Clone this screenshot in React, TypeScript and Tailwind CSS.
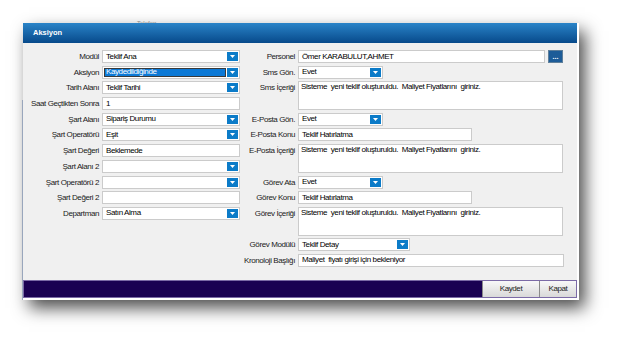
import type { ReactNode } from 'react';

function DropBtn() {
  return (
    <span className="my-[1px] mr-[1px] flex w-[11px] shrink-0 items-center justify-center bg-[#0b7bc8]">
      <svg width="5" height="3" viewBox="0 0 5 3" aria-hidden>
        <path d="M0 0h5L2.5 3z" fill="#fff" />
      </svg>
    </span>
  );
}

function Select({ value, w, active }: { value: string; w: string; active?: boolean }) {
  return (
    <div className={`flex h-[13px] shrink-0 border border-[#cbcbcb] bg-white ${w}`}>
      {active ? (
        <span className="m-[1px] flex flex-1 items-center border border-[#3a3a3a] bg-[#0c79d6] pl-[1px] text-white">
          {value}
        </span>
      ) : (
        <span className="flex flex-1 items-center pl-[3px] text-black">{value}</span>
      )}
      <DropBtn />
    </div>
  );
}

function Input({ value, w }: { value?: string; w: string }) {
  return (
    <div className={`flex h-[13px] shrink-0 items-center border border-[#cbcbcb] bg-white pl-[3px] text-black ${w}`}>
      {value}
    </div>
  );
}

function Area({ value }: { value: string }) {
  return (
    <div className="h-[29px] w-[265px] shrink-0 border border-[#cbcbcb] bg-white pl-[2px] leading-[10px] text-black">
      {value}
    </div>
  );
}

function Row({ label, labelW, children, top }: { label: string; labelW: string; children: ReactNode; top?: boolean }) {
  return (
    <div className={`flex gap-[3px] ${top ? 'items-start' : 'items-center'}`}>
      <span className={`shrink-0 text-right leading-[13px] text-[#1a1a1a] ${labelW}`}>{label}</span>
      {children}
    </div>
  );
}

const MSG = 'Sisteme  yeni teklif oluşturuldu.  Maliyet Fiyatlarını  giriniz.';

export default function App() {
  const lw = 'w-[76px]';
  const rw = 'w-[54px]';
  return (
    <div className="relative h-[343px] w-[622px] overflow-hidden bg-white font-['Liberation_Sans',Arial,sans-serif] text-[8px] tracking-[-0.4px] whitespace-pre">
      {/* window behind the dialog */}
      <span className="absolute left-[137px] top-[19px] text-[6px] tracking-normal text-[#999]">Telefon</span>
      <span className="absolute left-[576px] top-[102px] h-[36px] w-[3px] bg-[#3d6ec0]" />
      <span className="absolute left-[22px] top-[100px] h-[200px] w-[1px] bg-[#b5c5de]" />

      <div className="pl-[23px] pt-[23px]">
        <div className="relative w-[556px] border-b-2 border-r-2 border-white bg-white shadow-[6px_8px_16px_rgba(0,0,0,0.7)]">
          <div className="flex h-[20px] items-center bg-gradient-to-b from-[#2a84c8] to-[#074a8b] pl-[10px] text-[7.5px] font-bold tracking-normal text-white">
            Aksiyon
          </div>
          <div className="flex h-[237px] bg-[#f0f0f0] pt-[7px]">
            <div className="flex w-[218px] flex-col gap-[2.7px]">
              <Row label="Modül" labelW={lw}><Select value="Teklif Ana" w="w-[138px]" /></Row>
              <Row label="Aksiyon" labelW={lw}><Select value="Kaydedildiğinde" w="w-[138px]" active /></Row>
              <Row label="Tarih Alanı" labelW={lw}><Select value="Teklif Tarihi" w="w-[138px]" /></Row>
              <Row label="Saat Geçtikten Sonra" labelW={lw}><Input value="1" w="w-[138px]" /></Row>
              <Row label="Şart Alanı" labelW={lw}><Select value="Sipariş Durumu" w="w-[138px]" /></Row>
              <Row label="Şart Operatörü" labelW={lw}><Select value="Eşit" w="w-[138px]" /></Row>
              <Row label="Şart Değeri" labelW={lw}><Input value="Beklemede" w="w-[138px]" /></Row>
              <Row label="Şart Alanı 2" labelW={lw}><Select value="" w="w-[138px]" /></Row>
              <Row label="Şart Operatörü 2" labelW={lw}><Select value="" w="w-[138px]" /></Row>
              <Row label="Şart Değeri 2" labelW={lw}><Input w="w-[138px]" /></Row>
              <Row label="Departman" labelW={lw}><Select value="Satın Alma" w="w-[138px]" /></Row>
            </div>
            <div className="flex flex-col gap-[2.6px]">
              <Row label="Personel" labelW={rw}>
                <div className="flex items-center gap-[3px]">
                  <Input value="Ömer KARABULUT,AHMET" w="w-[247px]" />
                  <span className="flex h-[13px] w-[15px] items-center justify-center border border-[#5f7f9a] bg-[#1d5c98] text-[7px] font-bold leading-none tracking-normal text-white">
                    ...
                  </span>
                </div>
              </Row>
              <Row label="Sms Gön." labelW={rw}><Select value="Evet" w="w-[85px]" /></Row>
              <Row label="Sms İçeriği" labelW={rw} top><Area value={MSG} /></Row>
              <Row label="E-Posta Gön." labelW={rw}><Select value="Evet" w="w-[85px]" /></Row>
              <Row label="E-Posta Konu" labelW={rw}><Input value="Teklif Hatırlatma" w="w-[174px]" /></Row>
              <Row label="E-Posta İçeriği" labelW={rw} top><Area value={MSG} /></Row>
              <Row label="Görev Ata" labelW={rw}><Select value="Evet" w="w-[85px]" /></Row>
              <Row label="Görev Konu" labelW={rw}><Input value="Teklif Hatırlatma" w="w-[174px]" /></Row>
              <Row label="Görev İçeriği" labelW={rw} top><Area value={MSG} /></Row>
              <Row label="Görev Modülü" labelW={rw}><Select value="Teklif Detay" w="w-[112px]" /></Row>
              <Row label="Kronoloji Başlığı" labelW={rw}><Input value="Maliyet  fiyatı girişi için bekleniyor" w="w-[266px]" /></Row>
            </div>
          </div>
          <div className="flex h-[18px] justify-end border border-[#7b6aa6] bg-[#1a0152]">
            <button type="button" className="w-[57px] border-l border-[#8a8a8a] bg-gradient-to-b from-[#f8f8f8] to-[#d9d9d9] text-[#222]">
              Kaydet
            </button>
            <button type="button" className="w-[37px] border-l border-[#8a8a8a] bg-gradient-to-b from-[#f8f8f8] to-[#d9d9d9] text-[#222]">
              Kapat
            </button>
          </div>
        </div>
      </div>
    </div>
  );
}
